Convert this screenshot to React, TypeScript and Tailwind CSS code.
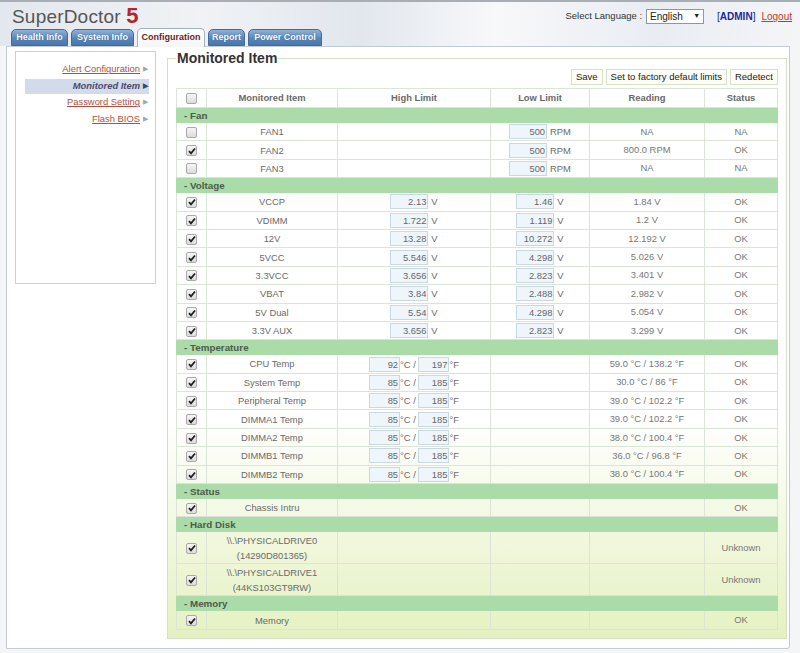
import React from "react";

type Row = {
  name: React.ReactNode;
  checked: boolean;
  high?: React.ReactNode;
  low?: React.ReactNode;
  reading?: string;
  status: string;
  tall?: boolean;
};

type Group = { title: string; rows: Row[] };

function Box({ v, w = "w-[38px]" }: { v: string; w?: string }) {
  return (
    <span
      className={`inline-block ${w} h-[15px] border border-[#cad8e4] bg-[#eef6fc] text-right pr-[1px] leading-[13px] text-[#666]`}
    >
      {v}
    </span>
  );
}

function Limit({ v, unit }: { v: string; unit: string }) {
  return (
    <span className="inline-flex items-center whitespace-nowrap align-middle">
      <Box v={v} />
      <span className="ml-[3px] pt-[1px]">{unit}</span>
    </span>
  );
}

function Temp({ c, f }: { c: string; f: string }) {
  return (
    <span className="inline-flex items-center whitespace-nowrap align-middle">
      <Box v={c} w="w-[31px]" />
      <span className="whitespace-pre pt-[1px]">°C / </span>
      <Box v={f} w="w-[31px]" />
      <span className="pt-[1px]">°F</span>
    </span>
  );
}

function Check({ on }: { on: boolean }) {
  return (
    <span className="inline-flex items-center justify-center w-[11px] h-[11px] rounded-[2px] border border-[#a9a9a9] bg-[linear-gradient(#f6f6f6,#dcdcdc)] align-middle">
      {on && (
        <svg width="8" height="8" viewBox="0 0 8 8">
          <path d="M1 4.2 L3 6.3 L7 1.5" stroke="#222" strokeWidth="1.8" fill="none" />
        </svg>
      )}
    </span>
  );
}

const groups: Group[] = [
  {
    title: "- Fan",
    rows: [
      { name: "FAN1", checked: false, low: <Limit v="500" unit="RPM" />, reading: "NA", status: "NA" },
      { name: "FAN2", checked: true, low: <Limit v="500" unit="RPM" />, reading: "800.0 RPM", status: "OK" },
      { name: "FAN3", checked: false, low: <Limit v="500" unit="RPM" />, reading: "NA", status: "NA" },
    ],
  },
  {
    title: "- Voltage",
    rows: [
      ["VCCP", "2.13", "1.46", "1.84 V"],
      ["VDIMM", "1.722", "1.119", "1.2 V"],
      ["12V", "13.28", "10.272", "12.192 V"],
      ["5VCC", "5.546", "4.298", "5.026 V"],
      ["3.3VCC", "3.656", "2.823", "3.401 V"],
      ["VBAT", "3.84", "2.488", "2.982 V"],
      ["5V Dual", "5.54", "4.298", "5.054 V"],
      ["3.3V AUX", "3.656", "2.823", "3.299 V"],
    ].map(([n, h, l, r]) => ({
      name: n,
      checked: true,
      high: <Limit v={h} unit="V" />,
      low: <Limit v={l} unit="V" />,
      reading: r,
      status: "OK",
    })),
  },
  {
    title: "- Temperature",
    rows: [
      ["CPU Temp", "92", "197", "59.0 °C / 138.2 °F"],
      ["System Temp", "85", "185", "30.0 °C / 86 °F"],
      ["Peripheral Temp", "85", "185", "39.0 °C / 102.2 °F"],
      ["DIMMA1 Temp", "85", "185", "39.0 °C / 102.2 °F"],
      ["DIMMA2 Temp", "85", "185", "38.0 °C / 100.4 °F"],
      ["DIMMB1 Temp", "85", "185", "36.0 °C / 96.8 °F"],
      ["DIMMB2 Temp", "85", "185", "38.0 °C / 100.4 °F"],
    ].map(([n, c, f, r]) => ({
      name: n,
      checked: true,
      high: <Temp c={c} f={f} />,
      reading: r,
      status: "OK",
    })),
  },
  {
    title: "- Status",
    rows: [{ name: "Chassis Intru", checked: true, status: "OK" }],
  },
  {
    title: "- Hard Disk",
    rows: [
      {
        name: (
          <>
            {"\\\\.\\PHYSICALDRIVE0"}
            <br />
            (14290D801365)
          </>
        ),
        checked: true,
        status: "Unknown",
        tall: true,
      },
      {
        name: (
          <>
            {"\\\\.\\PHYSICALDRIVE1"}
            <br />
            (44KS103GT9RW)
          </>
        ),
        checked: true,
        status: "Unknown",
        tall: true,
      },
    ],
  },
  {
    title: "- Memory",
    rows: [{ name: "Memory", checked: true, status: "OK" }],
  },
];

const tabs = [
  { label: "Health Info", w: "w-[57px]" },
  { label: "System Info", w: "w-[63px]" },
  { label: "Configuration", w: "w-[68px]", active: true },
  { label: "Report", w: "w-[37px]" },
  { label: "Power Control", w: "w-[74px]" },
];

const side = [
  { label: "Alert Configuration" },
  { label: "Monitored Item", active: true },
  { label: "Password Setting" },
  { label: "Flash BIOS" },
];

const td = "border border-[#dce3d8] text-center";

export default function App() {
  return (
    <div className="w-[800px] h-[653px] overflow-hidden bg-[#f3f5f7] font-['Liberation_Sans',Arial,sans-serif] text-[9.4px] text-[#6a6a6a]">
      {/* шапка */}
      <div className="h-[46px] border-t-2 border-[#a9aeb4] bg-[linear-gradient(90deg,#e3e8ee_0%,#f0f2f5_25%,#e2e7ee_45%,#f7f8fa_62%,#e9edf2_82%,#f4f5f7_100%)] flex flex-col">
        <div className="flex items-start justify-between h-[25px]">
          <div className="pl-[12px] pt-[3px] text-[19px] leading-[22px] text-[#555] tracking-[0.2px]">
            SuperDoctor <span className="text-[22px] font-bold text-[#b3262b]">5</span>
          </div>
          <div className="flex items-center pt-[7px] pr-[8px] text-[9.5px]">
            <span className="text-[#333]">Select Language :</span>
            <span className="ml-[4px] w-[58px] h-[15px] border border-[#8c98a6] bg-white flex items-center justify-between px-[3px] text-[10px] text-[#222]">
              English <span className="text-[7px]">▼</span>
            </span>
            <span className="ml-[13px] text-[10px] text-[#1a2a9c]">
              [<b>ADMIN</b>]
            </span>
            <span className="ml-[6px] text-[10px] text-[#c0392b] underline">Logout</span>
          </div>
        </div>
        <div className="flex items-end gap-[3px] pl-[11px] h-[19px]">
          {tabs.map((t) =>
            t.active ? (
              <div
                key={t.label}
                className={`${t.w} h-[19px] mb-[-1px] rounded-t-[5px] border border-b-0 border-[#9fb1c5] bg-[linear-gradient(#ffffff,#f4f6f8)] flex items-center justify-center text-[9px] font-bold text-[#6d1f1f] relative z-10`}
              >
                {t.label}
              </div>
            ) : (
              <div
                key={t.label}
                className={`${t.w} h-[17px] rounded-t-[5px] border border-[#44699a] bg-[linear-gradient(#8fb2d8,#5a87b9_55%,#4a77aa)] flex items-center justify-center text-[9px] font-bold text-white [text-shadow:0_0_1px_#2d4d78]`}
              >
                {t.label}
              </div>
            )
          )}
        </div>
      </div>

      {/* панель */}
      <div className="ml-[6px] w-[784px] h-[603px] border border-[#c3cbd6] rounded-br-[3px] bg-white flex pl-[8px] pr-[2px]">
        <div className="mt-[4px] w-[141px] h-[233px] border border-[#cbd2da] bg-white pt-[10px] flex flex-col gap-[1.5px]">
          {side.map((s) =>
            s.active ? (
              <div
                key={s.label}
                className="ml-[9px] mr-[6px] h-[15px] bg-[#d3daea] flex items-center justify-end pr-[1px] italic font-bold text-[#4b4b6b]"
              >
                {s.label}
                <span className="ml-[3px] text-[7px] not-italic text-[#2f4a7c]">▶</span>
              </div>
            ) : (
              <div key={s.label} className="h-[15px] flex items-center justify-end pr-[7px] text-[#b0513f]">
                <span className="underline">{s.label}</span>
                <span className="ml-[3px] text-[7px] text-[#9aa7b8]">▶</span>
              </div>
            )
          )}
        </div>

        <fieldset className="ml-[11px] mt-[2px] w-[620px] h-[590px] border border-[#d7dfca] bg-[linear-gradient(#ffffff_0%,#ffffff_62%,#e5f1c1_100%)] px-[8px] pb-[9px]">
          <legend className="px-[1px] text-[14px] leading-[18px] font-bold text-[#333]">
            Monitored Item
          </legend>
          <div className="flex justify-end gap-[3px] mt-[2px] h-[16px] text-[9.5px] text-[#222]">
            <span className="h-[16px] px-[4px] border border-[#dadfc7] bg-[#fcfdf6] flex items-center">Save</span>
            <span className="h-[16px] px-[4px] border border-[#dadfc7] bg-[#fcfdf6] flex items-center">
              Set to factory default limits
            </span>
            <span className="h-[16px] px-[4px] border border-[#dadfc7] bg-[#fcfdf6] flex items-center">Redetect</span>
          </div>
          <table className="mt-[3px] w-[601px] border-collapse table-fixed">
            <colgroup>
              <col className="w-[30px]" />
              <col className="w-[131px]" />
              <col className="w-[153px]" />
              <col className="w-[99px]" />
              <col className="w-[115px]" />
              <col className="w-[73px]" />
            </colgroup>
            <thead>
              <tr className="h-[19px] bg-white font-bold">
                <th className={td}>
                  <Check on={false} />
                </th>
                <th className={td}>Monitored Item</th>
                <th className={td}>High Limit</th>
                <th className={td}>Low Limit</th>
                <th className={td}>Reading</th>
                <th className={td}>Status</th>
              </tr>
            </thead>
            <tbody>
              {groups.map((g) => (
                <React.Fragment key={g.title}>
                  <tr className="h-[15px] bg-[#abdba9]">
                    <td colSpan={6} className="border border-[#abdba9] pl-[7px] font-bold text-[9.8px] text-[#4e5a4c] leading-[13px]">
                      {g.title}
                    </td>
                  </tr>
                  {g.rows.map((r, i) => (
                    <tr key={i} className={r.tall ? "h-[32px]" : "h-[18.4px]"}>
                      <td className={td}>
                        <Check on={r.checked} />
                      </td>
                      <td className={`${td} leading-[15px]`}>{r.name}</td>
                      <td className={`${td} leading-[14px]`}>{r.high}</td>
                      <td className={`${td} leading-[14px]`}>{r.low}</td>
                      <td className={`${td} text-[#777]`}>{r.reading}</td>
                      <td className={`${td} text-[#777]`}>{r.status}</td>
                    </tr>
                  ))}
                </React.Fragment>
              ))}
            </tbody>
          </table>
        </fieldset>
      </div>
    </div>
  );
}
